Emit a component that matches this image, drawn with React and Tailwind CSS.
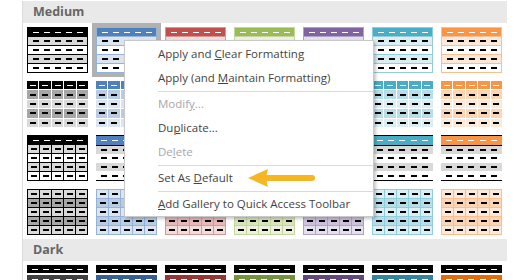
import React from 'react';

const palette = [
  { base: 'bg-black', dark: 'bg-[#a6a6a6]', light: 'bg-[#d9d9d9]', line: 'bg-black', border: 'border-black', deep: 'bg-[#404040]' },
  { base: 'bg-[#4f81bd]', dark: 'bg-[#b8cce4]', light: 'bg-[#dbe5f1]', line: 'bg-[#95b3d7]', border: 'border-[#95b3d7]', deep: 'bg-[#366092]' },
  { base: 'bg-[#c0504d]', dark: 'bg-[#e6b8b7]', light: 'bg-[#f2dcdb]', line: 'bg-[#da9694]', border: 'border-[#da9694]', deep: 'bg-[#963634]' },
  { base: 'bg-[#9bbb59]', dark: 'bg-[#d8e4bc]', light: 'bg-[#ebf1de]', line: 'bg-[#c4d79b]', border: 'border-[#c4d79b]', deep: 'bg-[#76933c]' },
  { base: 'bg-[#8064a2]', dark: 'bg-[#ccc0da]', light: 'bg-[#e4dfec]', line: 'bg-[#b1a0c7]', border: 'border-[#b1a0c7]', deep: 'bg-[#60497a]' },
  { base: 'bg-[#4bacc6]', dark: 'bg-[#b7dee8]', light: 'bg-[#daeef3]', line: 'bg-[#92cddc]', border: 'border-[#92cddc]', deep: 'bg-[#31869b]' },
  { base: 'bg-[#f79646]', dark: 'bg-[#fcd5b4]', light: 'bg-[#fde9d9]', line: 'bg-[#fabf8f]', border: 'border-[#fabf8f]', deep: 'bg-[#e26b0a]' },
];

const five = [0, 1, 2, 3, 4];

function Dash({ white }) {
  return <span className={`block w-[6px] ${white ? 'h-px bg-white' : 'h-[2px] bg-black'}`} />;
}

function DashRow({ bg, white }) {
  return (
    <div className={`flex flex-1 items-center justify-around px-[2px] ${bg}`}>
      {five.map((i) => <Dash key={i} white={white} />)}
    </div>
  );
}

function CellRow({ bg, white }) {
  return (
    <div className="flex flex-1 gap-px">
      {five.map((i) => (
        <div key={i} className={`flex flex-1 items-center justify-center ${bg}`}>
          <Dash white={white} />
        </div>
      ))}
    </div>
  );
}

// Medium 1-7: banded rows with thin rules
function LightThumb({ c }) {
  return (
    <div className={`w-[61px] h-[46px] border flex flex-col gap-px ${c.line} ${c.border}`}>
      <DashRow bg={c.base} white />
      <DashRow bg={c.light} />
      <DashRow bg="bg-white" />
      <DashRow bg={c.light} />
      <DashRow bg="bg-white" />
    </div>
  );
}

// Medium 8-14: tinted grid with white rules
function GridThumb({ c }) {
  return (
    <div className="w-[61px] h-[46px] flex flex-col gap-px bg-white">
      <CellRow bg={c.base} white />
      <CellRow bg={c.dark} />
      <CellRow bg={c.light} />
      <CellRow bg={c.dark} />
      <CellRow bg={c.light} />
    </div>
  );
}

// Medium 15-21: black top/bottom rules
function RuledThumb({ c, boxed }) {
  if (boxed) {
    return (
      <div className="w-[61px] h-[46px] flex flex-col gap-px bg-black p-px">
        <DashRow bg="bg-black" white />
        <CellRow bg="bg-[#d9d9d9]" />
        <CellRow bg="bg-white" />
        <CellRow bg="bg-[#d9d9d9]" />
        <CellRow bg="bg-white" />
      </div>
    );
  }
  return (
    <div className="w-[61px] h-[46px] flex flex-col">
      <div className="h-px bg-black" />
      <DashRow bg={c.base} white />
      <div className="h-px bg-black" />
      <DashRow bg="bg-[#d9d9d9]" />
      <DashRow bg="bg-white" />
      <DashRow bg="bg-[#d9d9d9]" />
      <DashRow bg="bg-white" />
      <div className="h-px bg-black" />
    </div>
  );
}

// Medium 22-28: full grid
function FullGridThumb({ c }) {
  return (
    <div className={`w-[61px] h-[46px] flex flex-col gap-px p-px ${c.line}`}>
      <CellRow bg={c.light} />
      <CellRow bg={c.dark} />
      <CellRow bg={c.light} />
      <CellRow bg={c.dark} />
      <CellRow bg={c.light} />
    </div>
  );
}

function DarkThumb({ c }) {
  return (
    <div className="w-[61px] h-[46px] flex flex-col gap-[2px]">
      <div className="h-[8px] flex"><DashRow bg="bg-black" white /></div>
      <div className="h-[8px] flex"><DashRow bg={c.deep} white /></div>
      <div className="h-[8px] flex"><DashRow bg="bg-[#404040]" white /></div>
    </div>
  );
}

function Cell({ selected, children }) {
  return <div className={`w-[69px] h-[54px] p-[4px] ${selected ? 'bg-[#b1b1b1]' : ''}`}>{children}</div>;
}

function Header({ label, className = '' }) {
  return (
    <div className={`h-[22px] bg-[#e9e9e9] flex items-center pl-[10px] text-[12.5px] font-bold text-[#666666] ${className}`}>
      <span>{label}</span>
    </div>
  );
}

function MenuItem({ children, disabled }) {
  return (
    <div className={`h-[24px] flex items-center pl-[33px] ${disabled ? 'text-[#a6a6a6]' : 'text-[#444444]'}`}>
      <span>{children}</span>
    </div>
  );
}

function Sep() {
  return (
    <div className="h-[2px] pt-[1px]">
      <div className="ml-[33px] h-px bg-[#dadada]" />
    </div>
  );
}

export default function App() {
  return (
    <div className="relative w-[517px] h-[280px] overflow-hidden bg-white font-['Open_Sans',sans-serif]">
      <div className="ml-[22px] w-[485px] h-[280px] border-l border-[#dcdcdc]">
        <Header label="Medium" className="mt-[1px]" />
        <div className="flex">
          {palette.map((c, i) => <Cell key={i} selected={i === 1}><LightThumb c={c} /></Cell>)}
        </div>
        <div className="flex">
          {palette.map((c, i) => <Cell key={i}><GridThumb c={c} /></Cell>)}
        </div>
        <div className="flex">
          {palette.map((c, i) => <Cell key={i}><RuledThumb c={c} boxed={i === 0} /></Cell>)}
        </div>
        <div className="flex">
          {palette.map((c, i) => <Cell key={i}><FullGridThumb c={c} /></Cell>)}
        </div>
        <Header label="Dark" />
        <div className="flex">
          {palette.map((c, i) => <Cell key={i}><DarkThumb c={c} /></Cell>)}
        </div>
      </div>

      {/* context menu */}
      <div className="absolute left-[124px] top-[40px] w-[250px] h-[177px] bg-white border border-[#c8c8c8] shadow-[2px_2px_3px_rgba(0,0,0,0.22)] pt-[1px] text-[11.5px]">
        <MenuItem>Apply and <u>C</u>lear Formatting</MenuItem>
        <MenuItem>Apply (and <u>M</u>aintain Formatting)</MenuItem>
        <Sep />
        <MenuItem disabled>Modif<u>y</u>...</MenuItem>
        <MenuItem>Du<u>p</u>licate...</MenuItem>
        <MenuItem disabled>De<u>l</u>ete</MenuItem>
        <Sep />
        <MenuItem>Set As <u>D</u>efault</MenuItem>
        <Sep />
        <MenuItem><u>A</u>dd Gallery to Quick Access Toolbar</MenuItem>
      </div>

      <svg className="absolute left-[246px] top-[167px]" width="72" height="22" viewBox="0 0 72 22">
        <path d="M2 11 L22 2 Q19 11 22 20 Z" fill="#f5b622" />
        <line x1="20" y1="11" x2="66" y2="11" stroke="#f5b622" strokeWidth="6" strokeLinecap="round" />
      </svg>
    </div>
  );
}
